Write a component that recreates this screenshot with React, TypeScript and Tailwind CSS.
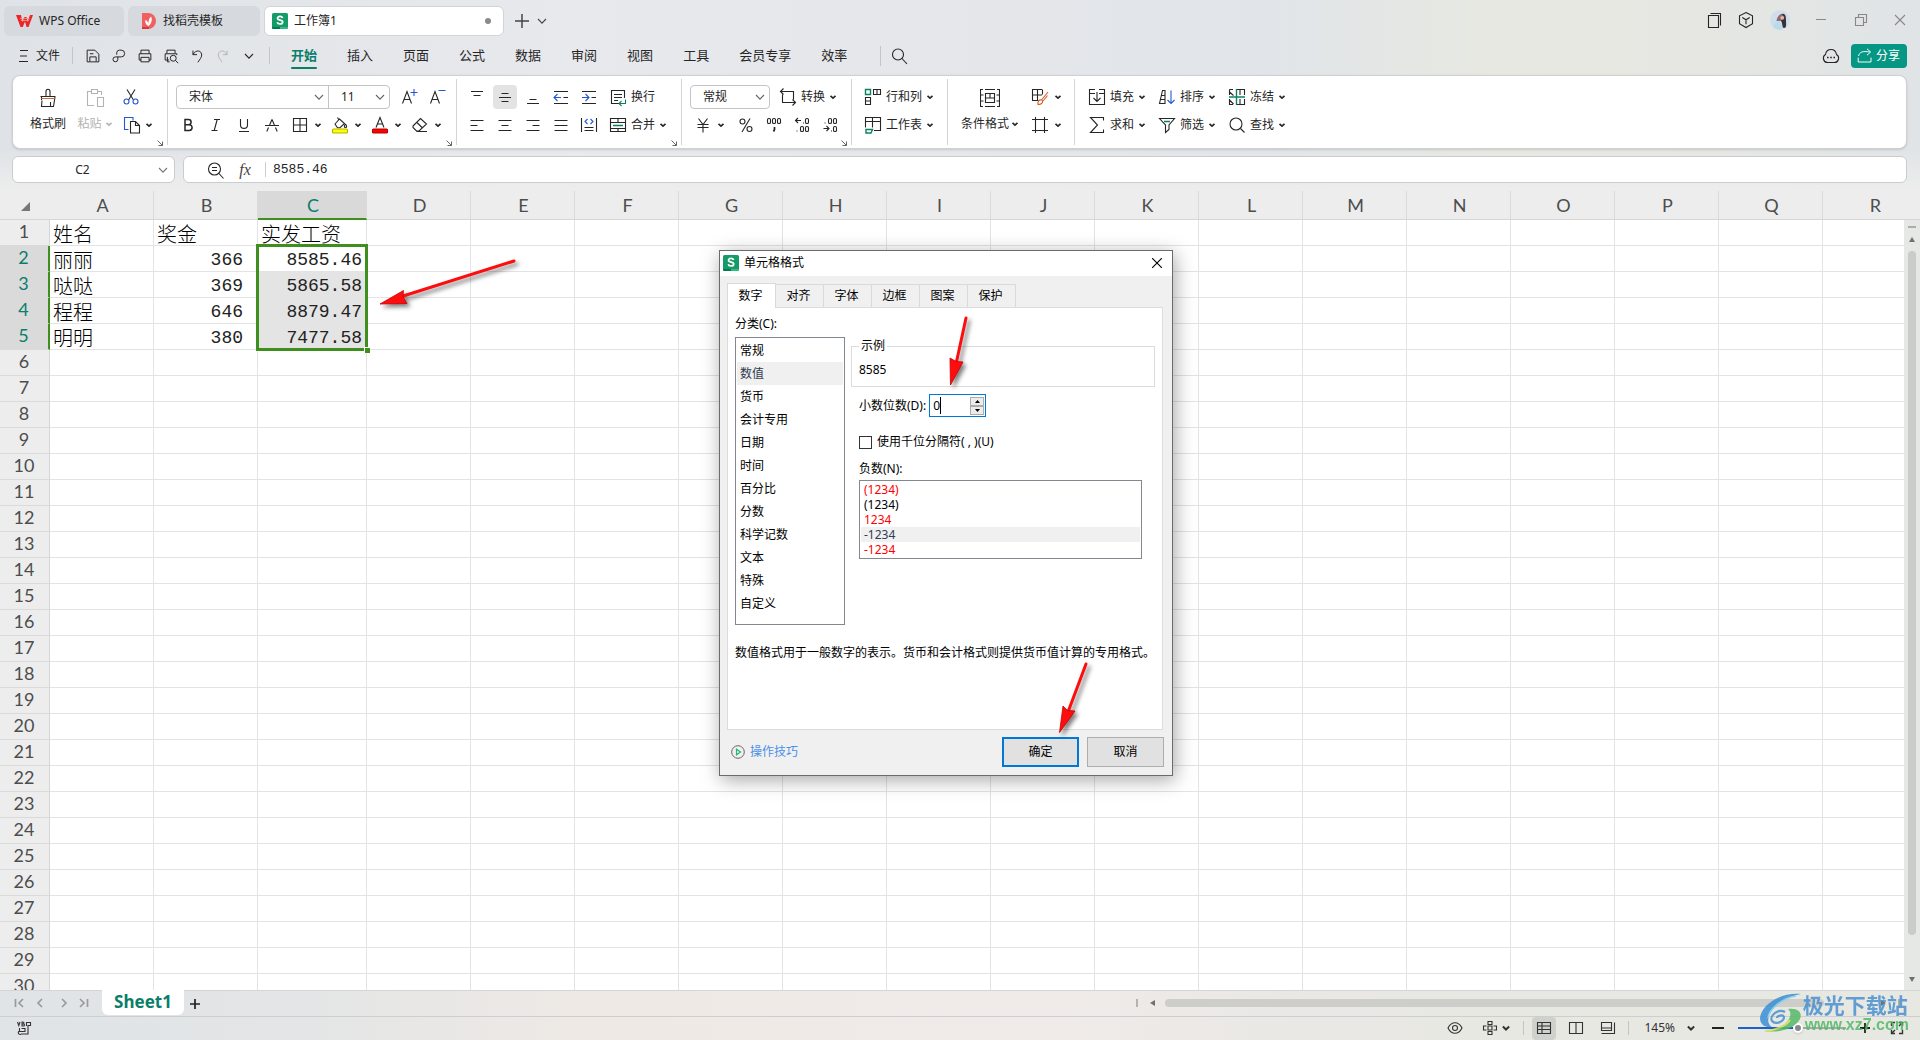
import { useState } from 'react'
import type { ReactNode } from 'react'
import clsx from 'clsx'

const MENU = ['开始', '插入', '页面', '公式', '数据', '审阅', '视图', '工具', '会员专享', '效率']

const COLUMNS = 'ABCDEFGHIJKLMNOPQR'.split('')

const ROWS: Record<number, string[]> = {
	1: ['姓名', '奖金', '实发工资'],
	2: ['丽丽', '366', '8585.46'],
	3: ['哒哒', '369', '5865.58'],
	4: ['程程', '646', '8879.47'],
	5: ['明明', '380', '7477.58'],
}

const CATEGORIES = [
	'常规',
	'数值',
	'货币',
	'会计专用',
	'日期',
	'时间',
	'百分比',
	'分数',
	'科学记数',
	'文本',
	'特殊',
	'自定义',
]

const NEGATIVES = [
	{ label: '(1234)', red: true },
	{ label: '(1234)', red: false },
	{ label: '1234', red: true },
	{ label: '-1234', red: false },
	{ label: '-1234', red: true },
]

const BLUE = '#2456d6'
const GREEN = '#0c8160'

/* ---------- small shared pieces ---------- */

const Icon = ({ children, className }: { children: ReactNode; className?: string }) => (
	<svg
		viewBox="0 0 20 20"
		fill="none"
		stroke="currentColor"
		strokeWidth="1.1"
		aria-hidden="true"
		className={clsx('shrink-0', className ?? 'size-5')}
	>
		{children}
	</svg>
)

const Caret = ({ className }: { className?: string }) => (
	<svg viewBox="0 0 8 8" fill="none" stroke="currentColor" strokeWidth="1.6" aria-hidden="true" className={clsx('size-2 shrink-0', className)}>
		<path d="M1.5 2.8 4 5.2l2.5-2.4" />
	</svg>
)

const ThinCaret = ({ className }: { className?: string }) => (
	<svg viewBox="0 0 10 10" fill="none" stroke="currentColor" strokeWidth="1.1" aria-hidden="true" className={clsx('size-2.5 shrink-0', className)}>
		<path d="m1 3 4 4.2L9 3" />
	</svg>
)

const SheetLogo = () => (
	<svg viewBox="0 0 16 16" aria-hidden="true" className="size-4 shrink-0">
		<rect width="16" height="16" rx="1.5" fill="#149c68" />
		<path d="M0 14h8v2H1.5A1.5 1.5 0 0 1 0 14.500z" fill="#067a50" />
		<path d="M8 14h8v.5a1.500 1.500 0 0 1-1.500 1.500H8z" fill="#35b984" />
		<path d="M10.600 5C10.200 3.900 9.300 3.400 8 3.400c-1.500 0-2.500.7-2.500 1.900 0 2.700 5.200 1.100 5.200 3.700 0 1.200-1.100 2-2.700 2-1.500 0-2.500-.6-2.800-1.800" fill="none" stroke="#fff" strokeWidth="1.700" />
	</svg>
)

const Tool = ({ label, icon, text, caret, className }: { label: string; icon: ReactNode; text?: boolean; caret?: boolean; className?: string }) => (
	<button type="button" aria-label={label} className={clsx('flex h-6 shrink-0 items-center rounded', className)}>
		{icon}
		{text && <span className="ml-[3px] whitespace-nowrap">{label}</span>}
		{caret && <Caret className="ml-1" />}
	</button>
)

const Square = ({ label, icon, active }: { label: string; icon: ReactNode; active?: boolean }) => (
	<button type="button" aria-label={label} className="flex h-6 w-7 shrink-0 items-center justify-center">
		<span className={clsx('flex h-6 w-6 items-center justify-center rounded', active && 'bg-[#e3e3e3]')}>{icon}</span>
	</button>
)

const Group = ({ children, corner, className }: { children: ReactNode; corner?: boolean; className?: string }) => (
	<div className={clsx('flex shrink-0 flex-col gap-1 pt-[9px]', className)}>
		{children}
		{corner && (
			<svg viewBox="0 0 8 8" fill="none" stroke="#666" aria-hidden="true" className="mt-[-2px] mr-[3px] size-2 self-end">
				<path d="m1.500 1.500 5 5M6.500 2.500v4h-4" />
			</svg>
		)}
	</div>
)

const Divider = () => <div className="h-[66px] w-px shrink-0 self-center bg-[#d4d4d4]" />

const Row = ({ children, className }: { children: ReactNode; className?: string }) => (
	<div className={clsx('flex h-6 items-center', className)}>{children}</div>
)

const Combo = ({ label, value, className }: { label: string; value: string; className?: string }) => (
	<div className={clsx('relative h-6', className)}>
		<select aria-label={label} defaultValue={value} className="size-full appearance-none pl-3 outline-none">
			<option>{value}</option>
		</select>
		<ThinCaret className="pointer-events-none absolute top-[7px] right-1 text-[#666]" />
	</div>
)

/* ---------- title bar ---------- */

const TitleBar = () => (
	<div className="flex h-[42px] items-start gap-1 pt-1.5 pl-1">
		<button type="button" className="flex h-[30px] w-[120px] items-center gap-1.5 rounded-md bg-[#d6d9dd] pl-3">
			<svg viewBox="0 0 17 12" aria-hidden="true" className="h-3 w-[17px] shrink-0">
				<path d="M0 0h5l1.300 7L8.500 2h2l1 5L14 0h3l-4.500 12h-2L9 6.500 6.800 12H4.500z" fill="#e8262b" />
				<path d="M4 3.500h9.500M5 5.500h8" stroke="#f8a08a" strokeWidth=".8" />
			</svg>
			WPS Office
		</button>
		<button type="button" className="flex h-[30px] w-[132px] items-center gap-[7px] rounded-md bg-[#d6d9dd] pl-[13px]">
			<svg viewBox="0 0 15 16" aria-hidden="true" className="h-4 w-[15px] shrink-0">
				<path d="M1 0h6a8 8 0 0 1 0 16H1z" fill="#f0605f" />
				<path d="M1 14h7v2H1z" fill="#d8393c" />
				<path d="M7.500 13C4 11 4 8.500 4.500 7c1.500.5 2.500 2 3 4C7.300 8 8 5 10 3.500c1.500 2 1 7-2.500 9.500z" fill="#fff" />
			</svg>
			找稻壳模板
		</button>
		<button type="button" className="flex h-[30px] w-60 items-center gap-1.5 rounded-md border border-[#d2d4d7] bg-white pl-[7px]">
			<SheetLogo />
			工作簿1
			<span className="mr-3 ml-auto size-1.5 rounded-full bg-[#8a8a8a]" />
		</button>
		<button type="button" aria-label="新建" className="ml-[3px] flex h-[30px] items-center gap-2 text-[#444]">
			<svg viewBox="0 0 14 14" stroke="currentColor" strokeWidth="1.500" aria-hidden="true" className="ml-1 size-[14px]">
				<path d="M7 0v14M0 7h14" />
			</svg>
			<ThinCaret className="size-2" />
		</button>

		<div className="ml-auto flex h-7 items-center">
			<button type="button" aria-label="标签" className="flex w-8 justify-center">
				<Icon><path d="M4.500 5.500h10v12h-10zM6.500 3.500h10v12" /></Icon>
			</button>
			<button type="button" aria-label="工作区" className="flex w-8 justify-center">
				<Icon><path d="m10 2.500 6.500 3.300v8L10 17.500l-6.500-3.700v-8zM6.300 7.500 10 9.800l3.700-2.300M10 9.800v4.500" /></Icon>
			</button>
			<button type="button" aria-label="账户" className="flex w-9 justify-center">
				<svg viewBox="0 0 20 20" aria-hidden="true" className="size-5">
					<circle cx="10" cy="10" r="10" fill="#cfdeea" />
					<path d="M9.500 9C9.500 5 11 3.500 13 3.800c3 .4 3 3.700 3 6.700 0 3 .5 5-.5 7-1.500 1-3 .5-3-1.500l-.8-4z" fill="#3c3038" />
					<path d="M6.500 11C7 7 9 4.500 12 4l1.500 2.500L12 10l-2.500 1z" fill="#8c6a70" />
					<circle cx="12.300" cy="7.800" r="1.900" fill="#e9b3a5" />
					<path d="M3 17c1-3.500 3-5.500 5.500-5.500s3.500 3 3 8c-3 .5-6.500-.2-8.500-2.500z" fill="#b9dcec" />
				</svg>
			</button>
			<button type="button" aria-label="最小化" className="flex w-[46px] justify-center text-[#888]">
				<Icon><path d="M5 9.500h10" strokeWidth="1" /></Icon>
			</button>
			<button type="button" aria-label="还原" className="flex w-[34px] justify-center text-[#888]">
				<Icon><path d="M4.500 7.500h8v8h-8zM7.500 7.500v-3h8v8h-3" /></Icon>
			</button>
			<button type="button" aria-label="关闭" className="mr-[-2px] flex w-11 justify-center text-[#888]">
				<Icon><path d="m5 5 10 10M15 5 5 15" /></Icon>
			</button>
		</div>
	</div>
)

/* ---------- menu row ---------- */

const QUICK = [
	{
		label: '保存',
		icon: <path d="M3.500 16.500v-13h8.500l4.500 4.500v8.500zM6.500 16v-5h7v5M6.500 7.500h4" />,
	},
	{
		label: '输出为PDF',
		icon: <path d="M7.500 8.500V6a3 3 0 0 1 3-2.500h2a3.500 3.500 0 0 1 0 7.500H6a2.700 2.700 0 1 0 2.700 2.800V11" />,
	},
	{
		label: '打印',
		icon: <path d="M5.500 7.500v-4h9v4M5.500 14.500h-2v-7h13v7h-2M5.500 11.500h9v5h-9z" />,
	},
	{
		label: '打印预览',
		icon: (
			<>
				<path d="M5.500 7V3.500h9V7M8 14.500H3.500v-7h13V9M6 11v5.500h2.500" />
				<circle cx="12.500" cy="12.500" r="3.300" />
				<path d="m15 15 3 3" />
			</>
		),
	},
	{
		label: '撤销',
		icon: <path d="M5.500 4v4.500H10M5.500 8.500c1.500-3 4-4.500 6.500-4 3.500 1 4 5 2 8L11 17" />,
	},
]

const MenuRow = () => {
	const [active, setActive] = useState('开始')

	return (
		<div className="flex h-[27px] items-center">
			<button type="button" className="ml-[14px] flex items-center gap-0.5">
				<Icon>
					<path d="M6 4.500h8M6 10h7M5 15.500h9" />
				</Icon>
				文件
			</button>
			<div className="mr-[7px] ml-3 h-[17px] w-px bg-[#c3c5c8]" />
			{QUICK.map(({ label, icon }) => (
				<button key={label} type="button" aria-label={label} className="flex w-[26px] justify-center">
					<Icon className="size-[18px]">{icon}</Icon>
				</button>
			))}
			<button type="button" aria-label="恢复" className="flex w-[26px] justify-center text-[#b5b5b5]">
				<Icon className="size-[18px]">
					<path d="M14.500 4v4.500H10M14.500 8.500c-1.500-3-4-4.500-6.500-4-3.500 1-4 5-2 8L9 17" />
				</Icon>
			</button>
			<button type="button" aria-label="自定义快速访问" className="flex w-[26px] justify-center">
				<ThinCaret />
			</button>
			<div className="mr-1.5 ml-[7px] h-[17px] w-px bg-[#c3c5c8]" />
			<nav className="flex h-full">
				{MENU.map((item) => (
					<button
						key={item}
						type="button"
						onClick={() => setActive(item)}
						className={clsx('flex h-full flex-col items-center px-[15px] text-[13px]', item === active && 'font-bold text-[#0a7d6b]')}
					>
						<span className="mt-px flex-1 leading-[24px]">{item}</span>
						<span className={clsx('h-0.5 w-full rounded-full', item === active && 'bg-[#0a7d6b]')} />
					</button>
				))}
			</nav>
			<div className="mr-2 ml-[18px] h-5 w-px bg-[#c3c5c8]" />
			<button type="button" aria-label="搜索">
				<Icon>
					<circle cx="9" cy="8.500" r="5.500" />
					<path d="m13 12.500 5 5.500" />
				</Icon>
			</button>
			<button type="button" aria-label="消息" className="mr-2.5 ml-auto">
				<Icon>
					<path d="M6.500 16.500a4.300 4.300 0 0 1-2-8C5 5.500 7 3.500 10 3.500s5 2 5.500 5a4.300 4.300 0 0 1-2 8z" />
					<path d="M6 11.500h1.600M9.200 11.500h1.600M12.400 11.500H14" strokeWidth="1.700" />
				</Icon>
			</button>
			<button type="button" className="mr-[13px] flex h-6 w-14 items-center gap-[3px] rounded bg-[#069684] pl-1.5 text-white">
				<Icon className="size-4">
					<path d="M1.500 12v5.500h16V12M2 10c1-5 5-6.500 14-5M12.500 1l4.500 4-4.500 4" strokeWidth="1.200" />
				</Icon>
				分享
			</button>
		</div>
	)
}

/* ---------- ribbon ---------- */

const GridIcon = () => (
	<Icon>
		<path d="M3.500 3.500h13v13h-13zM10 3.500v13M3.500 10h13" />
	</Icon>
)

const Ribbon = () => (
	<div className="mt-1.5 mr-[13px] ml-3 flex h-[74px] overflow-hidden rounded-lg border border-[#cfd0d2] bg-white shadow-sm">
		<div className="flex w-[154px] shrink-0">
			<button type="button" className="ml-[13px] flex w-11 flex-col items-center gap-2 pt-3">
				<Icon>
					<path d="M2.500 8.500h15M8 8V3.500c0-3 4-3 4 0V8M3.500 9v3M4 12.500 3.500 18.500h12l1.500-9.500M12.500 14v4" />
					<path d="M3.500 10.500h13" stroke="#d9683a" />
				</Icon>
				<span className="leading-4">格式刷</span>
			</button>
			<button type="button" className="ml-1.5 flex w-[38px] flex-col items-center gap-2 pt-3 text-[#b3b3b3]">
				<Icon>
					<path d="M6 3.500H2.500v14H9M13 3.500h3.500V7M6.500 1.500h6v4h-6zM12.500 9.500h6v9h-6z" />
				</Icon>
				<span className="flex items-center gap-[3px] leading-4">
					粘贴 <Caret />
				</span>
			</button>
			<Group corner className="ml-[7px] grow">
				<Tool
					label="剪切"
					icon={
						<Icon>
							<path d="m6 2.500 6.500 10.500M14 2.500 7.500 13" />
							<circle cx="5.500" cy="14.500" r="2.500" stroke={BLUE} />
							<circle cx="14.500" cy="14.500" r="2.500" stroke={BLUE} />
						</Icon>
					}
				/>
				<Tool
					label="复制"
					caret
					icon={
						<Icon>
							<path d="M7.500 14.500h-4v-12h8.500v3" stroke={BLUE} />
							<path d="M9.500 6.500h5l4 4v7.500h-9zM14.500 6.500v4h4" />
						</Icon>
					}
				/>
			</Group>
		</div>
		<Divider />

		<Group corner className="w-[288px] pl-1.5">
			<Row>
				<div className="ml-0.5 flex rounded border border-[#c4c4c4]">
					<Combo label="字体" value="宋体" className="-my-px w-[152px] border-r border-[#c4c4c4]" />
					<Combo label="字号" value="11" className="-my-px w-[60px]" />
				</div>
				<div className="ml-[5px] flex">
					<Square
						label="增大字号"
						icon={
							<Icon>
								<path d="m3.500 16.500 4.500-12 4.500 12M5 12.500h6" />
								<path d="M11.500 5.500h7M15 2v7" stroke={BLUE} />
							</Icon>
						}
					/>
					<Square
						label="减小字号"
						icon={
							<Icon>
								<path d="m3.500 16.500 4.500-12 4.500 12M5 12.500h6" />
								<path d="M11.500 3.500h7" stroke={BLUE} />
							</Icon>
						}
					/>
				</div>
			</Row>
			<Row>
				<Square label="加粗" icon={<Icon><path d="M7 4.500h3.500a2.600 2.600 0 0 1 0 5.200H7zM7 9.700h4.200a2.900 2.900 0 0 1 0 5.800H7z" strokeWidth="1.500" /></Icon>} />
				<Square label="倾斜" icon={<Icon><path d="M8 4.500h6M5.500 15.500h6M11.200 4.500l-3 11" /></Icon>} />
				<Square label="下划线" icon={<Icon><path d="M6.500 4v6c0 4.500 7 4.500 7 0V4M5 16.500h10" /></Icon>} />
				<Square label="删除线" icon={<Icon><path d="M3 10.500h14M10 4.500 7.600 10M10 4.500l2.400 5.500M6.500 12.500l-1.700 4M13.500 12.500l1.700 4" /></Icon>} />
				<div className="ml-1 flex">
					<Tool label="边框" caret className="w-10" icon={<GridIcon />} />
					<Tool
						label="填充颜色"
						caret
						className="w-10"
						icon={
							<Icon>
								<path d="m5 9 4.500-5 5 4.500-4.500 4.200H7.500zM9 5 7.500 2.500M15.500 9c1.500 2 1.500 3.500 0 3.500s-1.500-1.500 0-3.500" />
								<rect x="2.500" y="14" width="15" height="4" rx="1" fill="#ffff00" stroke="#b3b300" />
							</Icon>
						}
					/>
					<Tool
						label="字体颜色"
						caret
						className="w-10"
						icon={
							<Icon>
								<path d="m6 12.500 4-10 4 10M7.500 9h5" />
								<rect x="2.500" y="14" width="15" height="4" rx="1" fill="#ff0000" stroke="#b30000" />
							</Icon>
						}
					/>
					<Tool label="清除" caret className="w-10" icon={<Icon><path d="m3 11 7.500-7.500 6 5.500-7.500 7H6.500L3 12.500zM7 7.500l5.500 5.500M6.500 16.500H17" /></Icon>} />
				</div>
			</Row>
		</Group>
		<Divider />

		<Group corner className="w-[224px] pl-1.5">
			<Row>
				<Square label="顶端对齐" icon={<Icon><path d="M4 4.500h12M6.500 8.500h7" /></Icon>} />
				<Square label="垂直居中" active icon={<Icon><path d="M6.500 6.500h7M4 10.500h12M6.500 14.500h7" /></Icon>} />
				<Square label="底端对齐" icon={<Icon><path d="M6.500 12.500h7M4 16.500h12" /></Icon>} />
				<Square
					label="减少缩进"
					icon={<Icon><path d="M3 4.500h14M3 16.500h14M12.500 10.500H17" /><path d="M3.500 10.500H10M6.500 7l-3.500 3.500L6.500 14" stroke={BLUE} /></Icon>}
				/>
				<Square
					label="增加缩进"
					icon={<Icon><path d="M3 4.500h14M3 16.500h14M12.500 10.500H17" /><path d="M3 10.500h6.500M6.500 7l3.500 3.500L6.500 14" stroke={BLUE} /></Icon>}
				/>
				<Tool
					label="换行"
					text
					className="ml-[5px]"
					icon={<Icon><path d="M11 16.500H3.500v-13h13V11M6 7.500h8M6 10.500h8M6 13.500h4" /><path d="M17.500 12.500v4h-6M13.500 14l-2.500 2.500 2.500 2.500" stroke={GREEN} /></Icon>}
				/>
			</Row>
			<Row>
				<Square label="左对齐" icon={<Icon><path d="M3.500 5.500h13M3.500 10.500h7M3.500 15.500h13" /></Icon>} />
				<Square label="水平居中" icon={<Icon><path d="M3.500 5.500h13M6.500 10.500h7M3.500 15.500h13" /></Icon>} />
				<Square label="右对齐" icon={<Icon><path d="M3.500 5.500h13M9.500 10.500h7M3.500 15.500h13" /></Icon>} />
				<Square label="两端对齐" icon={<Icon><path d="M3.500 5.500h13M3.500 10.500h13M3.500 15.500h13" /></Icon>} />
				<Square
					label="分散对齐"
					icon={<Icon><path d="M2.500 3v14M17.500 3v14M5.500 12.500h9M5.500 15.500h9" /><path d="M8.500 4 6 6.500 8.500 9M11.500 4 14 6.500 11.500 9" stroke={BLUE} /></Icon>}
				/>
				<Tool
					label="合并"
					text
					caret
					className="ml-[5px]"
					icon={<Icon><path d="M2.500 3.500h15v13h-15zM2.500 7.500h15M2.500 13.500h15M10 3.500v4M10 13.500v3" /><path d="M5 10.500h10" stroke={GREEN} strokeWidth="1.500" /></Icon>}
				/>
			</Row>
		</Group>
		<Divider />

		<Group corner className="w-[169px] pl-2">
			<Row>
				<div className="rounded border border-[#c4c4c4]">
					<Combo label="数字格式" value="常规" className="-my-px w-[78px]" />
				</div>
				<Tool
					label="转换"
					text
					caret
					className="ml-2"
					icon={<Icon><path d="M2.500 4.500h13v8M5.500 1.500l-3 3 3 3M17.500 15.500h-13v-8M14.500 12.500l3 3-3 3" /></Icon>}
				/>
			</Row>
			<Row>
				<Tool label="货币" caret className="mr-[7px] ml-[3px]" icon={<Icon><path d="m5.500 3.500 4.500 6 4.500-6M4.500 9.500h11M4.500 12.500h11M10 9.500v8" /></Icon>} />
				<Square label="百分比" icon={<Icon><circle cx="6.500" cy="6.500" r="2.500" /><circle cx="13.500" cy="14" r="2.500" /><path d="m14 3.500-8 13.500" /></Icon>} />
				<Square
					label="千位分隔"
					icon={<Icon><rect x="3.500" y="3.500" width="3" height="5" rx="1.300" /><rect x="8.500" y="3.500" width="3" height="5" rx="1.300" /><rect x="13.500" y="3.500" width="3" height="5" rx="1.300" /><path d="M10.500 12v2.500l-1 2" strokeWidth="1.700" /></Icon>}
				/>
				<Square
					label="增加小数位"
					icon={<Icon><path d="M9 5.500H3.500M6 3 3.500 5.500 6 8M11 8h1M4.500 16h1" /><rect x="13.500" y="3.500" width="3" height="5" rx="1.300" /><rect x="8.500" y="11.500" width="3" height="5" rx="1.300" /><rect x="13.500" y="11.500" width="3" height="5" rx="1.300" /></Icon>}
				/>
				<Square
					label="减少小数位"
					icon={<Icon><path d="M3.500 13.500H9M6.500 11 9 13.500 6.500 16M11 16h1M4.500 8h1" /><rect x="8.500" y="3.500" width="3" height="5" rx="1.300" /><rect x="13.500" y="3.500" width="3" height="5" rx="1.300" /><rect x="13.500" y="11.500" width="3" height="5" rx="1.300" /></Icon>}
				/>
			</Row>
		</Group>
		<Divider />

		<Group className="w-[95px] pl-[11px]">
			<Tool
				label="行和列"
				text
				caret
				icon={<Icon><path d="M2.500 10.500h5v7h-5zM2.500 14h5M10.500 2.500h7v5h-7zM14 2.500v5" /><path d="M2.500 2.500h5v5h-5z" stroke={GREEN} strokeWidth="1.400" /></Icon>}
			/>
			<Tool
				label="工作表"
				text
				caret
				icon={<Icon><path d="M2.500 12.500v-10h15v13H11M2.500 6.500h15M9.500 2.500v10" /><path d="M3 14.500h6.500L8 18H3z" stroke={GREEN} strokeWidth="1.400" /></Icon>}
			/>
		</Group>
		<Divider />

		<div className="flex w-[126px] shrink-0 pl-[13px]">
			<button type="button" className="flex flex-col items-center gap-2 pt-3">
				<Icon>
					<path d="M3 1.500H.5v17H3M17 1.500h2.500v17H17M.5 7h3M.5 13h3M16.500 7h3M16.500 13h3M5 1.500h10M5 18.500h10M5.500 5.500h9v9h-9zM5.500 10h9M10 5.500V10" />
				</Icon>
				<span className="flex items-center gap-0.5 leading-4">
					条件格式 <Caret />
				</span>
			</button>
			<Group className="ml-[11px]">
				<Tool
					label="表格样式"
					caret
					icon={<Icon><path d="M12 2.500H2.500v11h6M2.500 8H12M7.500 2.500v11M12.500 2.500v5" /><path d="m18 5-6.500 8M8 17.500c-.5-3 1-5 3.500-4.500 2 .5 1.500 4.500-3.500 4.500zM17.500 8.500 13 14" stroke="#d2622a" /></Icon>}
				/>
				<Tool label="单元格" caret icon={<Icon><path d="M5.500 2v16M14.500 2v16M2 4.500h16M2 15.500h16" /></Icon>} />
			</Group>
		</div>
		<Divider />

		<Group className="pl-3">
			<Row className="gap-[11px]">
				<Tool label="填充" text caret icon={<Icon><path d="M8 2.500H2.500v15h15v-15H12M2.500 6.500H8M12 6.500h5.500M10 5v9M6.500 11l3.500 3.500 3.500-3.500" /></Icon>} />
				<Tool
					label="排序"
					text
					caret
					icon={<Icon><path d="m2.500 16.500 3-13h2.500v13zM4.500 8.500H8M3.500 12.500H8" /><path d="M14 3.500v13M10.500 13l3.500 3.500 3.500-3.500" stroke={BLUE} /></Icon>}
				/>
				<Tool
					label="冻结"
					text
					caret
					icon={<Icon><path d="M2.500 2.500H6M2.500 2.500V8M9 2.500h8.500V8M2.500 12v5.500H6M9 17.500h8.500V12M2.500 5l4 3.500M2.500 13l4 4M13 3v5M13 12v5" /><path d="M9.500 2v16M2 10h16" stroke={GREEN} strokeWidth="1.400" /></Icon>}
				/>
			</Row>
			<Row className="gap-[11px]">
				<Tool label="求和" text caret icon={<Icon><path d="M16.500 5.500v-3h-13l7 7.500-7 7.500h13v-3" /></Icon>} />
				<Tool label="筛选" text caret icon={<Icon><path d="M2.500 3.500h15L12 10v4.500L8.500 17.500V10z" /><path d="M7 6.500h6" stroke={GREEN} strokeWidth="1.400" /></Icon>} />
				<Tool label="查找" text caret icon={<Icon><circle cx="9" cy="9" r="6" /><path d="m13.500 13.500 4 4" /></Icon>} />
			</Row>
		</Group>
	</div>
)

/* ---------- formula bar ---------- */

const FormulaBar = () => (
	<div className="bg-linear-to-b from-transparent to-[#ededed] pt-[7px] pr-[13px] pb-2 pl-3">
		<div className="flex h-[27px] gap-2">
			<div className="flex w-[163px] shrink-0 items-center rounded-md border border-[#cbcccd] bg-white pr-1.5">
				<input aria-label="名称框" defaultValue="C2" className="w-full min-w-0 pr-1.5 text-center outline-none" />
				<ThinCaret className="text-[#777]" />
			</div>
			<div className="flex flex-1 items-center rounded-md border border-[#cbcccd] bg-white pl-[21px]">
				<button type="button" aria-label="浏览公式结果">
					<Icon>
						<circle cx="9.500" cy="9" r="6" />
						<path d="m14 13.500 4.500 5M7 7.500h5M7 10.500h5" />
					</Icon>
				</button>
				<button type="button" aria-label="插入函数" className="ml-2.5 w-5 font-['Liberation_Serif',serif] text-base text-[#444] italic">
					fx
				</button>
				<div className="ml-2.5 h-[15px] w-px bg-[#cfcfcf]" />
				<input
					aria-label="编辑栏"
					defaultValue="8585.46"
					className="ml-[7px] min-w-0 flex-1 font-['Liberation_Mono',monospace] text-[13px] outline-none"
				/>
			</div>
		</div>
	</div>
)

/* ---------- sheet ---------- */

const isSelectedRow = (row: number) => row >= 2 && row <= 5

const Grid = () => (
	<div className="relative min-w-0 flex-1 overflow-hidden bg-white">
		<table className="w-max table-fixed border-separate border-spacing-0">
			<colgroup>
				<col className="w-[50px]" />
				{COLUMNS.map((col) => (
					<col key={col} className={col === 'C' ? 'w-[109px]' : 'w-[104px]'} />
				))}
			</colgroup>
			<thead>
				<tr className="h-[29px] font-['Lato',sans-serif] text-lg leading-6 text-[#4d4d4d]">
					<th aria-label="全选" className="border-b border-[#d6d6d6] bg-[#ededed] p-0">
						<svg viewBox="0 0 9 9" aria-hidden="true" className="mt-0.5 ml-[21px] size-[9px]">
							<path d="M9 0v9H0z" fill="#777" />
						</svg>
					</th>
					{COLUMNS.map((col) => (
						<th
							key={col}
							className={clsx(
								'border-r border-r-[#dadada] p-0 pl-0.5 font-normal',
								col === 'C' ? 'border-b-2 border-b-[#3f8f1f] bg-[#d9d9d9] text-[#0a7d6b]' : 'border-b border-b-[#d6d6d6] bg-[#ededed]',
							)}
						>
							{col}
						</th>
					))}
				</tr>
			</thead>
			<tbody>
				{Array.from({ length: 30 }, (_, i) => i + 1).map((row) => (
					<tr key={row} className="h-[26px]">
						<th
							className={clsx(
								"p-0 pr-px pb-[3px] align-top font-['Lato',sans-serif] text-lg leading-[22px] font-normal",
								'border-b border-b-[#dadada]',
								isSelectedRow(row) ? 'border-r-2 border-r-[#3f8f1f] bg-[#dadada] text-[#0a7d6b]' : 'border-r border-r-[#d6d6d6] bg-[#ededed] text-[#4d4d4d]',
							)}
						>
							{row}
						</th>
						{COLUMNS.map((col, c) => (
							<td
								key={col}
								className={clsx(
									'border-r border-b border-[#e3e3e3] p-0 pt-1 leading-[21px] whitespace-nowrap',
									row > 1 && c > 0 ? "text-right font-['Liberation_Mono',monospace] text-lg text-[#222]" : 'pl-[3px] text-xl font-light text-black',
									c === 1 && 'pr-[14px]',
									c === 2 && 'pr-1',
									c === 2 && row >= 3 && row <= 5 && 'bg-[#e4e4e4]',
								)}
							>
								{ROWS[row]?.[c]}
							</td>
						))}
					</tr>
				))}
			</tbody>
		</table>
		{/* selected range C2:C5 */}
		<div className="pointer-events-none absolute top-[53px] left-64 h-[107px] w-[112px] border-3 border-[#3f8f1f]" />
		<div className="absolute top-[156px] left-[364px] size-[6px] border-t border-l border-white bg-[#3f8f1f]" />
	</div>
)

const VerticalScroll = () => (
	<div className="flex w-4 shrink-0 flex-col items-center bg-[#e6e8e5] text-[#707070]">
		<div className="h-[29px] w-full border-b border-[#d6d6d6] bg-[#ededed]" />
		<div className="mt-1.5 h-0.5 w-2 bg-[#adadad]" />
		<svg viewBox="0 0 6 6" fill="currentColor" aria-hidden="true" className="mt-[9px] size-1.5">
			<path d="M3 0 6 5H0z" />
		</svg>
		<div className="mt-2 w-2 flex-1 rounded-full bg-[#cacbca]" />
		<svg viewBox="0 0 6 6" fill="currentColor" aria-hidden="true" className="mt-[41px] mb-2 size-1.5">
			<path d="M0 1h6L3 6z" />
		</svg>
	</div>
)

const SheetTabs = () => (
	<div className="flex h-[27px] items-start border-t border-b border-t-[#d3d5d6] border-b-[#cccecf]">
		<div className="flex h-6 w-[102px] items-center pl-[13px] text-[#9a9a9a]">
			{[
				{ label: '第一张', d: 'M2.500 2v8M10 2 6 6l4 4', w: 'w-[21px]' },
				{ label: '上一张', d: 'M8 2 4 6l4 4', w: 'w-6' },
				{ label: '下一张', d: 'm4 2 4 4-4 4', w: 'w-5' },
				{ label: '最后一张', d: 'm2 2 4 4-4 4M9.500 2v8', w: 'w-5' },
			].map(({ label, d, w }) => (
				<button key={label} type="button" aria-label={label} className={w}>
					<svg viewBox="0 0 12 12" fill="none" stroke="currentColor" strokeWidth="1.700" aria-hidden="true" className="size-3">
						<path d={d} />
					</svg>
				</button>
			))}
		</div>
		<button type="button" className="-mt-px h-[25px] w-[82px] rounded-b-md bg-white pb-0.5 text-[17px] leading-[22px] font-bold text-[#0a7d6b]">
			Sheet1
		</button>
		<button type="button" aria-label="新建工作表" className="ml-1.5 flex h-6 items-center text-[#222]">
			<svg viewBox="0 0 10 10" stroke="currentColor" strokeWidth="1.700" aria-hidden="true" className="mt-0.5 size-2.5">
				<path d="M5 0v10M0 5h10" />
			</svg>
		</button>
		<div className="ml-auto flex h-6 w-[784px] items-center text-[#707070]">
			<div className="h-2 w-0.5 bg-[#b5b2b0]" />
			<svg viewBox="0 0 6 6" fill="currentColor" aria-hidden="true" className="ml-3 size-1.5">
				<path d="M5 0v6L0 3z" />
			</svg>
			<div className="ml-[9px] h-2 flex-1 rounded-full bg-[#cdceca]" />
			<svg viewBox="0 0 6 6" fill="currentColor" aria-hidden="true" className="ml-14 size-1.5">
				<path d="M1 0v6l5-3z" />
			</svg>
			<div className="mr-5 ml-3 h-2 w-0.5 bg-[#adadad]" />
		</div>
	</div>
)

const StatusBar = () => (
	<div className="flex h-[23px] items-center pb-px text-[#333]">
		<button type="button" aria-label="宏" className="ml-[14px]">
			<Icon>
				<path d="m3.500 4 1.300 3.500L6 4M8 4v4h1.500a1 1 0 0 0 0-2H8.500 9a1 1 0 0 0 0-2zM12.500 8V4.500h4v3h-2.500v8.500H7M5.500 10v3M4.500 13.500h7M4.500 13.500c-.8 2.500.5 3 2.500 3M7.500 10.500H11v3" />
			</Icon>
		</button>
		<button type="button" aria-label="护眼模式" className="ml-auto">
			<Icon>
				<path d="M3 10c3.500-7 10.500-7 14 0-3.500 7-10.500 7-14 0z" />
				<circle cx="10" cy="10" r="2.500" />
			</Icon>
		</button>
		<button type="button" aria-label="阅读模式" className="ml-[15px] flex items-center">
			<Icon>
				<path d="M8 6.500v-3h4v3zM8 16.500v-3h4v3zM6.500 8h-3v4h3M13.500 8h3v4h-3M8 8h4v4H8z" />
			</Icon>
			<Caret className="ml-px size-2.5" />
		</button>
		<div className="mr-2 ml-3 h-[14px] w-px bg-[#c4c4c0]" />
		<button type="button" aria-label="普通视图" className="flex h-[23px] w-6 items-center justify-center rounded bg-[#cfd1cc]">
			<Icon><path d="M3.500 4.500h13v11h-13zM3.500 8h13M3.500 11.500h13M8 4.500v11" /></Icon>
		</button>
		<button type="button" aria-label="分页预览" className="ml-2.5"><Icon><path d="M3.500 4.500h13v11h-13zM10 4.500v11" /></Icon></button>
		<button type="button" aria-label="页面布局" className="ml-3"><Icon><path d="M3.500 4.500h10v8h-10zM3.500 10h10M3.500 15.500h13v-11" /></Icon></button>
		<div className="mr-[15px] ml-2.5 h-[14px] w-px bg-[#c4c4c0]" />
		<button type="button" className="flex items-center gap-[11px] whitespace-nowrap">
			145% <Caret className="size-2.5" />
		</button>
		<button type="button" aria-label="缩小" className="ml-4 flex h-5 w-3 items-center">
			<span className="h-0.5 w-3 bg-[#222]" />
		</button>
		<input
			type="range"
			aria-label="缩放"
			defaultValue={56}
			className="mx-3.5 h-3 w-[108px] appearance-none bg-[linear-gradient(to_right,#1d5fd0_56%,#a9aaa8_56%)] bg-[length:100%_2px] bg-center bg-no-repeat [&::-webkit-slider-thumb]:size-2.5 [&::-webkit-slider-thumb]:appearance-none [&::-webkit-slider-thumb]:rounded-full [&::-webkit-slider-thumb]:border-2 [&::-webkit-slider-thumb]:border-white [&::-webkit-slider-thumb]:bg-[#888] [&::-webkit-slider-thumb]:shadow"
		/>
		<button type="button" aria-label="放大">
			<svg viewBox="0 0 10 10" stroke="#222" strokeWidth="1.800" aria-hidden="true" className="size-2.5">
				<path d="M5 0v10M0 5h10" />
			</svg>
		</button>
		<button type="button" aria-label="全屏" className="mr-[13px] ml-[17px]">
			<Icon><path d="M4.500 8V4.500H8M12 4.500h3.500V8M15.500 12v3.500H12M8 15.500H4.500V12M12 8l3-3M8 12l-3 3" strokeWidth="1.400" /></Icon>
		</button>
	</div>
)

/* ---------- cell format dialog ---------- */

const CellFormatDialog = () => {
	const [category, setCategory] = useState('数值')
	const [negative, setNegative] = useState(3)

	return (
		<div
			role="dialog"
			aria-label="单元格格式"
			className="absolute top-[250px] left-[719px] w-[454px] border border-[#6b6b6b] bg-[#f0f0f0] text-black shadow-[2px_4px_18px_rgba(0,0,0,0.35)]"
		>
			<div className="flex h-[25px] items-center gap-[5px] bg-white pb-0.5 pl-[3px]">
				<SheetLogo />
				<span>单元格格式</span>
				<button type="button" aria-label="关闭" className="mr-[10px] ml-auto">
					<svg viewBox="0 0 10 10" stroke="currentColor" strokeWidth="1.100" aria-hidden="true" className="size-2.5">
						<path d="m0 0 10 10M10 0 0 10" />
					</svg>
				</button>
			</div>

			<div role="tablist" className="mt-[7px] ml-[7px] flex items-end">
				{['数字', '对齐', '字体', '边框', '图案', '保护'].map((tab, i) => (
					<button
						key={tab}
						type="button"
						role="tab"
						aria-selected={i === 0}
						className={clsx(
							'border border-b-0 border-[#d9d9d9]',
							i === 0 ? 'relative -mb-px h-[25px] w-[49px] bg-white pr-0.5 pb-px' : 'h-[23px] w-12 border-l-0 pr-0.5',
						)}
					>
						{tab}
					</button>
				))}
			</div>

			<div className="mr-[9px] ml-[7px] flex h-[423px] flex-col border border-[#dcdcdc] bg-white px-[7px]">
				<div className="flex gap-1.5">
					<div className="w-[110px] pt-[7px]">
						<div id="category-label" className="leading-[18px]">分类(C):</div>
						<ul role="listbox" aria-labelledby="category-label" className="mt-1 h-[288px] border border-[#828790] p-px">
							{CATEGORIES.map((item) => (
								<li key={item}>
									<button
										type="button"
										role="option"
										aria-selected={item === category}
										onClick={() => setCategory(item)}
										className={clsx('block h-[23px] w-full pl-[3px] text-left', item === category && 'bg-[#f0f0f0] text-[#2f3c52]')}
									>
										{item}
									</button>
								</li>
							))}
						</ul>
					</div>

					<div className="flex-1 pt-[29px]">
						<fieldset className="h-[50px] border border-[#dcdcdc] px-[7px]">
							<legend className="bg-white px-0.5 leading-[18px]">示例</legend>
							<output className="block pt-1.5 leading-[18px]">8585</output>
						</fieldset>

						<div className="mt-[7px] flex items-center pl-2">
							<label htmlFor="decimals">小数位数(D):</label>
							<div className="ml-[3px] flex h-[23px] w-[57px] items-center border border-[#0078d7] bg-white p-px pl-[3px]">
								<input id="decimals" defaultValue="0" className="w-[7px] outline-none" />
								<span className="h-[17px] w-px bg-black" />
								<div className="ml-auto flex w-[14px] flex-col">
									<button type="button" aria-label="增加" className="flex h-[9px] items-center justify-center border border-[#acacac] bg-[#ececec]">
										<svg viewBox="0 0 5 3" aria-hidden="true" className="h-[3px] w-[5px]"><path d="M2.500 0 5 3H0z" /></svg>
									</button>
									<button type="button" aria-label="减少" className="flex h-[9px] items-center justify-center border border-[#acacac] bg-[#ececec]">
										<svg viewBox="0 0 5 3" aria-hidden="true" className="h-[3px] w-[5px]"><path d="M0 0h5L2.500 3z" /></svg>
									</button>
								</div>
							</div>
						</div>

						<label className="mt-4 flex h-[18px] items-center gap-[5px] pl-2">
							<input type="checkbox" className="size-[13px] appearance-none border border-[#333] bg-white" />
							使用千位分隔符( , )(U)
						</label>

						<div id="negative-label" className="mt-[9px] pl-2 leading-[18px]">负数(N):</div>
						<ul role="listbox" aria-labelledby="negative-label" className="mt-0.5 mr-[13px] ml-2 h-[79px] border border-[#828790] p-px">
							{NEGATIVES.map(({ label, red }, i) => (
								<li key={i}>
									<button
										type="button"
										role="option"
										aria-selected={i === negative}
										onClick={() => setNegative(i)}
										className={clsx(
											'block h-[15px] w-full pl-[3px] text-left leading-[15px]',
											red ? 'text-[#ff0000]' : i === negative ? 'text-[#2f3c52]' : 'text-black',
											i === negative && 'bg-[#f0f0f0]',
										)}
									>
										{label}
									</button>
								</li>
							))}
						</ul>
					</div>
				</div>
				<p className="mt-[19px] leading-[18px] whitespace-nowrap">
					数值格式用于一般数字的表示。货币和会计格式则提供货币值计算的专用格式。
				</p>
			</div>

			<div className="flex items-center gap-2 pt-[7px] pr-2 pb-2 pl-[11px]">
				<a href="#tips" className="mr-auto flex items-center gap-[5px] text-[#4a90e8]">
					<svg viewBox="0 0 14 14" fill="none" aria-hidden="true" className="size-[14px]">
						<circle cx="7" cy="7" r="6.300" stroke="#666" />
						<path d="M5.500 4.200v5.600L9.500 7z" stroke="#22b573" strokeWidth="1.200" />
					</svg>
					操作技巧
				</a>
				<button type="button" className="h-[30px] w-[77px] border-2 border-[#0078d7] bg-[#e1e1e1]">确定</button>
				<button type="button" className="h-[30px] w-[77px] border border-[#adadad] bg-[#e1e1e1]">取消</button>
			</div>
		</div>
	)
}

/* ---------- overlays ---------- */

const ARROWS = [
	{ line: 'M514 261 400 297', head: 'M380 304 403.500 290.500 403 297 407 303.500z' },
	{ line: 'M966 318 956 364', head: 'M950.500 385 950 358 956 361.500 963 362z' },
	{ line: 'M1086 664 1068 712', head: 'M1059.500 732.500 1063 706 1067.500 710.500 1075 711z' },
]

const Arrows = () => (
	<svg
		aria-hidden="true"
		className="pointer-events-none absolute inset-0 size-full drop-shadow-[3px_3px_2px_rgba(0,0,0,0.5)]"
	>
		{ARROWS.map(({ line, head }) => (
			<g key={line} fill="#fd0d0d" stroke="#c00" strokeLinejoin="round">
				<path d={line} stroke="#fd0d0d" strokeWidth="3" strokeLinecap="round" />
				<path d={head} strokeWidth=".8" />
			</g>
		))}
	</svg>
)

const Watermark = () => (
	<div className="pointer-events-none absolute right-[11px] bottom-[7px] flex items-center opacity-85">
		<svg viewBox="0 0 42 40" aria-hidden="true" className="h-10 w-[42px]">
			<path d="M41 1C20-1 1 12 0 25c0 7 6 10 12 9C1 27 15 6 41 1z" fill="#3a8fd4" />
			<path d="M36 3C22 5 9 16 8 25" fill="none" stroke="#7fd0f0" strokeWidth="1.500" />
			<path d="M28 16c12-2 16 6 10 13C31 37 17 40 4 38c13-1 22-6 25-12 2-4 2-7-1-10z" fill="#55b96a" />
			<path d="M6 38c10-1 20-5 24-11" fill="none" stroke="#d8e04a" strokeWidth="2" />
			<path d="M25 19c-7-4-16 4-13 9 3 4 12 1 12-4-1-3-7-1-7 1" fill="none" stroke="#4a8fd0" strokeWidth="2.200" />
		</svg>
		<div className="ml-px flex flex-col">
			<span className="text-[21px] leading-6 font-bold text-[#4a90d0]">极光下载站</span>
			<span className="ml-0.5 font-['Liberation_Sans',sans-serif] text-base leading-4 font-bold text-[#55b96a]">www.xz7.com</span>
		</div>
	</div>
)

export default function App() {
	return (
		<div className="relative flex h-screen flex-col overflow-hidden bg-[linear-gradient(to_right,#dfe3e7,#e8e9ec_30%,#e4e6ea_52%,#e1e5e9_66%,#e7e8e1_78%,#e6e7e2_88%,#e0e4e7)] font-['Noto_Sans','Noto_Sans_CJK_SC',sans-serif] text-xs text-[#262626]">
			<TitleBar />
			<MenuRow />
			<Ribbon />
			<FormulaBar />
			<div className="flex min-h-0 flex-1">
				<Grid />
				<VerticalScroll />
			</div>
			<div className="bg-[linear-gradient(to_right,#e0e4e7,#e3e5e6_15%,#eee9e5_30%,#f0ebe8_55%,#e9e8e4_68%,#e6e8e1)]">
				<SheetTabs />
				<StatusBar />
			</div>
			<CellFormatDialog />
			<Arrows />
			<Watermark />
		</div>
	)
}
